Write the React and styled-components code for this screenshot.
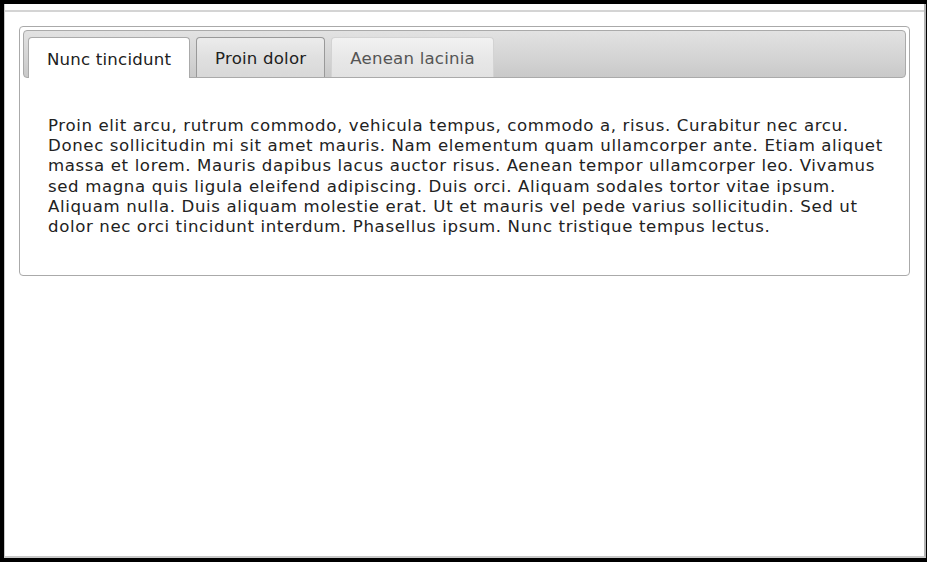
import React, { useState } from "react";
import styled, { createGlobalStyle } from "styled-components";

const GlobalStyle = createGlobalStyle`
  html, body {
    margin: 0;
    padding: 0;
    background: #000;
  }
  body {
    font-family: "DejaVu Sans", Verdana, sans-serif;
  }
`;

const Frame = styled.div`
  box-sizing: border-box;
  margin: 4px 1px 4px 4px;
  height: 554px;
  background: #fff;
  border-left: 1px solid #c8c8c8;
  border-right: 2px solid #b4b4b4;
  border-bottom: 2px solid #c8c8c8;
  padding-top: 6px;
`;

const Content = styled.div`
  border-top: 2px solid #d4d4d4;
  padding: 14px;
`;

const Widget = styled.div`
  border: 1px solid #aaa;
  border-radius: 4px;
  padding: 3px;
  background: #fff;
`;

const Nav = styled.ul`
  list-style: none;
  margin: 0;
  padding: 6px 4px 0;
  display: flex;
  gap: 6px;
  border: 1px solid #aaa;
  border-radius: 4px;
  background: linear-gradient(to bottom, #e2e2e2 0%, #d6d6d6 50%, #c9c9c9 100%);
`;

const tabStates = {
  active: `
    background: #fff;
    border-color: #aaa;
    color: #212121;
    margin-bottom: -1px;
    height: 41px;
  `,
  hover: `
    background: linear-gradient(to bottom, #ececec 0%, #e0e0e0 50%, #d8d8d8 100%);
    border-color: #999;
    color: #212121;
  `,
  idle: `
    background: linear-gradient(to bottom, #f2f2f2 0%, #e8e8e8 50%, #e2e2e2 100%);
    border-color: #d3d3d3;
    color: #555;
  `,
};

const Tab = styled.li`
  box-sizing: border-box;
  height: 40px;
  display: flex;
  align-items: center;
  padding: 2px 18px 0 18px;
  border: 1px solid;
  border-bottom: none;
  border-radius: 4px 4px 0 0;
  font-size: 16.6px;
  letter-spacing: 0.2px;
  cursor: pointer;
  ${({ $state }) => tabStates[$state]}
`;

const Panel = styled.div`
  padding: 38px 16px 35px 25px;
  font-size: 16.6px;
  line-height: 20.2px;
  letter-spacing: 0.62px;
  color: #222;
`;

const tabs = [
  {
    title: "Nunc tincidunt",
    body:
      "Proin elit arcu, rutrum commodo, vehicula tempus, commodo a, risus. Curabitur nec arcu. Donec sollicitudin mi sit amet mauris. Nam elementum quam ullamcorper ante. Etiam aliquet massa et lorem. Mauris dapibus lacus auctor risus. Aenean tempor ullamcorper leo. Vivamus sed magna quis ligula eleifend adipiscing. Duis orci. Aliquam sodales tortor vitae ipsum. Aliquam nulla. Duis aliquam molestie erat. Ut et mauris vel pede varius sollicitudin. Sed ut dolor nec orci tincidunt interdum. Phasellus ipsum. Nunc tristique tempus lectus.",
  },
  {
    title: "Proin dolor",
    body:
      "Morbi tincidunt, dui sit amet facilisis feugiat, odio metus gravida ante, ut pharetra massa metus id nunc. Duis scelerisque molestie turpis. Sed fringilla, massa eget luctus malesuada, metus eros molestie lectus, ut tempus eros massa ut dolor.",
  },
  {
    title: "Aenean lacinia",
    body:
      "Mauris eleifend est et turpis. Duis id erat. Suspendisse potenti. Aliquam vulputate, pede vel vehicula accumsan, mi neque rutrum erat, eu congue orci lorem eget lorem.",
  },
];

const App = () => {
  const [active, setActive] = useState(0);
  const hover = 1;

  return (
    <>
      <GlobalStyle />
      <Frame>
        <Content>
          <Widget>
            <Nav>
              {tabs.map((t, i) => (
                <Tab
                  key={t.title}
                  $state={i === active ? "active" : i === hover ? "hover" : "idle"}
                  onClick={() => setActive(i)}
                >
                  {t.title}
                </Tab>
              ))}
            </Nav>
            <Panel>{tabs[active].body}</Panel>
          </Widget>
        </Content>
      </Frame>
    </>
  );
};

export default App;
